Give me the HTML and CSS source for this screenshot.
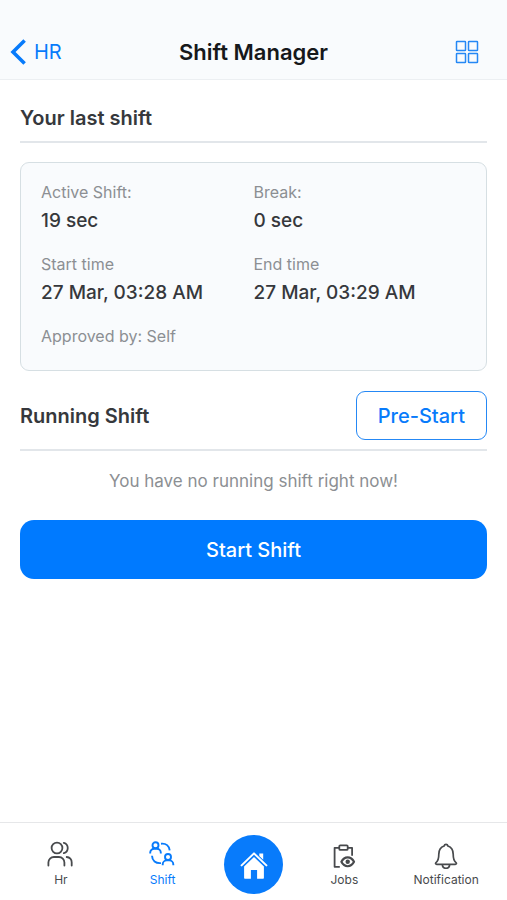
FILE: index.html
```html
<!DOCTYPE html>
<html lang="en">
<head>
<meta charset="utf-8">
<meta name="viewport" content="width=device-width, initial-scale=1">
<title>Shift Manager</title>
<link rel="stylesheet" href="styles.css">
</head>
<body>
<header class="topbar">
  <a class="back" href="#">
    <svg width="16" height="26" viewBox="0 0 16 26" fill="none" stroke="currentColor" stroke-width="3.6" aria-hidden="true"><path d="M14.600 1.500 3 13l11.600 11.500"/></svg>
    <span>HR</span>
  </a>
  <h1 class="title">Shift Manager</h1>
  <button class="menu" type="button" aria-label="Menu">
    <svg width="24" height="24" viewBox="0 0 24 24" fill="none" stroke="currentColor" stroke-width="1.500" aria-hidden="true"><rect x="1.500" y="1.500" width="9" height="9" rx=".6"/><rect x="13.500" y="1.500" width="9" height="9" rx=".6"/><rect x="1.500" y="13.500" width="9" height="9" rx=".6"/><rect x="13.500" y="13.500" width="9" height="9" rx=".6"/></svg>
  </button>
</header>

<main class="content">
  <div class="section-head">
    <h2 class="heading">Your last shift</h2>
  </div>

  <section class="card">
    <dl class="facts">
      <div><dt>Active Shift:</dt><dd>19 sec</dd></div>
      <div><dt>Break:</dt><dd>0 sec</dd></div>
      <div><dt>Start time</dt><dd>27 Mar, 03:28 AM</dd></div>
      <div><dt>End time</dt><dd>27 Mar, 03:29 AM</dd></div>
    </dl>
    <p class="approved">Approved by: Self</p>
  </section>

  <div class="section-head section-head-action">
    <h2 class="heading">Running Shift</h2>
    <button class="outline" type="button">Pre-Start</button>
  </div>
  <p class="empty">You have no running shift right now!</p>
  <button class="primary" type="button">Start Shift</button>
</main>

<nav class="tabs">
  <a class="tab" href="#">
    <svg width="28" height="28" viewBox="2 1 28 28" fill="none" stroke="currentColor" stroke-width="1.800" stroke-linecap="round" aria-hidden="true"><circle cx="12" cy="8" r="5.400"/><path d="M19.400 2.800a5.400 5.400 0 0 1 0 10.400M4 25.500v-3a5.500 5.500 0 0 1 5.500-5.500h5a5.500 5.500 0 0 1 5.500 5.500v3M22.300 17a5.200 5.200 0 0 1 5 5.500v3" transform="translate(-.6 0)"/></svg>
    <span>Hr</span>
  </a>
  <a class="tab tab-active" href="#">
    <svg width="28" height="28" viewBox="2 1 28 28" fill="none" stroke="currentColor" stroke-width="1.900" aria-hidden="true"><circle cx="8.500" cy="5.300" r="3"/><path d="M3.200 13.500v-.8a4 4 0 0 1 4-4h2.600a4 4 0 0 1 4 4v.8"/><circle cx="21" cy="17" r="3"/><path d="M15.700 25.300v-.9a4 4 0 0 1 4-4h2.600a4 4 0 0 1 4 4v.9M14 3.700c5.200-.6 8.200 2.200 8.700 6.600M5 15.700c.2 5 3.600 7.900 9 7.400"/></svg>
    <span>Shift</span>
  </a>
  <a class="home" href="#" aria-label="Home">
    <svg width="30" height="30" viewBox="0 0 30 30" aria-hidden="true"><path fill="none" stroke="currentColor" stroke-width="2" stroke-linecap="round" stroke-linejoin="round" d="M2.600 15.400 15 3.400l12.400 12"/><path fill="currentColor" d="M20.300 3.400h3.900v6.300l-3.900-3.800zM15 7l9.900 9.600V28q0 .8-.8.800h-6V20h-6.200v8.800h-6q-.8 0-.8-.8V16.600z"/></svg>
  </a>
  <a class="tab" href="#">
    <svg width="28" height="28" viewBox="0 -1 28 28" fill="none" stroke="currentColor" stroke-width="1.800" stroke-linejoin="round" aria-hidden="true"><path d="M9.300 5.800H4.600v19h5.200M17.700 5.800h4.400v8"/><rect x="9.300" y="3.300" width="8.400" height="4.600" rx="1"/><path stroke-width="2.200" d="M11.400 19.800c3-5.900 9.600-5.900 12.600 0-3 5.900-9.600 5.900-12.600 0z"/><circle cx="17.700" cy="19.800" r="2.200" fill="currentColor" stroke="none"/></svg>
    <span>Jobs</span>
  </a>
  <a class="tab" href="#">
    <svg width="28" height="28" viewBox="0 0 28 28" fill="none" stroke="currentColor" stroke-width="1.700" stroke-linejoin="round" aria-hidden="true"><path d="M14 3.400c1 0 1.700.7 1.900 1.600 3.600 1.200 5.300 4.200 5.300 8.200 0 4.600.7 6.800 2.800 8.400.8.800.4 1.800-.7 1.800H4.700c-1.100 0-1.500-1-.7-1.800 2.100-1.600 2.800-3.800 2.800-8.400 0-4 1.700-7 5.300-8.200.2-.9.900-1.600 1.900-1.600zM10.300 23.600c.3 2.400 1.600 3.700 3.700 3.700s3.400-1.300 3.700-3.700"/></svg>
    <span>Notification</span>
  </a>
</nav>
</body>
</html>
```
FILE: styles.css
```css
* {
  box-sizing: border-box;
}

body {
  display: flex;
  flex-direction: column;
  min-height: 100vh;
  margin: 0;
  background: #fff;
  color: #36383c;
  font-family: Inter, "Liberation Sans", sans-serif;
}

h1, h2, p, dl, dd {
  margin: 0;
}

button {
  font: inherit;
  cursor: pointer;
}

a {
  color: inherit;
  text-decoration: none;
}

svg {
  display: block;
}

.topbar {
  display: grid;
  grid-template-columns: 1fr auto 1fr;
  align-items: center;
  padding: 38px 28px 13px 10px;
  background: #f9fbfd;
  border-bottom: 1px solid #eceff2;
}

.back {
  display: flex;
  align-items: center;
  gap: 8px;
  color: #087bfb;
  font-size: 20px;
  line-height: 24px;
}

.title {
  padding-left: 18px;
  color: #16181b;
  font-size: 22px;
  font-weight: 600;
  line-height: 28px;
}

.menu {
  justify-self: end;
  padding: 0;
  border: 0;
  background: none;
  color: #2588f5;
}

.content {
  flex: 1;
  padding: 20px 20px 32px;
}

.section-head {
  display: flex;
  align-items: center;
  justify-content: space-between;
  padding: 4px 0 9px;
  border-bottom: 2px solid #e2e6ea;
}

.section-head-action {
  padding-top: 0;
}

.heading {
  font-size: 20px;
  font-weight: 600;
  line-height: 28px;
}

.card {
  margin: 19px 0 20px;
  padding: 19px 20px 20px;
  border: 1px solid #d6dfe3;
  border-radius: 9px;
  background: #f9fbfd;
}

.facts {
  display: grid;
  grid-template-columns: 1fr 1fr;
  row-gap: 19px;
}

.facts dt,
.approved {
  color: #8c8f93;
  font-size: 16px;
  line-height: 20px;
}

.facts dd {
  margin-top: 5px;
  font-size: 19px;
  font-weight: 500;
  line-height: 28px;
}

.approved {
  padding: 19px 0 4px;
}

.outline {
  height: 49px;
  padding: 0 21px;
  border: 1px solid #2588f5;
  border-radius: 9px;
  background: #fff;
  color: #087bfb;
  font-size: 20px;
  font-weight: 500;
}

.empty {
  padding: 19px 0 28px;
  color: #8c8f93;
  font-size: 17px;
  line-height: 22px;
  text-align: center;
}

.primary {
  display: block;
  width: 100%;
  height: 59px;
  border: 0;
  border-radius: 14px;
  background: #007aff;
  color: #fff;
  font-size: 20px;
  font-weight: 500;
}

.tabs {
  display: grid;
  grid-template-columns: 1fr 1fr 80px 1fr 1fr;
  align-items: center;
  padding: 12px 10px 6px;
  border-top: 1px solid #e6e7e9;
  background: #fff;
}

.tab {
  display: flex;
  flex-direction: column;
  align-items: center;
  gap: 3px;
  padding-bottom: 1px;
  color: #484a4d;
  font-size: 12px;
  line-height: 16px;
}

.tab-active {
  color: #087bfb;
}

.home {
  display: grid;
  place-items: center;
  justify-self: center;
  width: 59px;
  height: 59px;
  border-radius: 50%;
  background: #087bfb;
  color: #fff;
}
```
